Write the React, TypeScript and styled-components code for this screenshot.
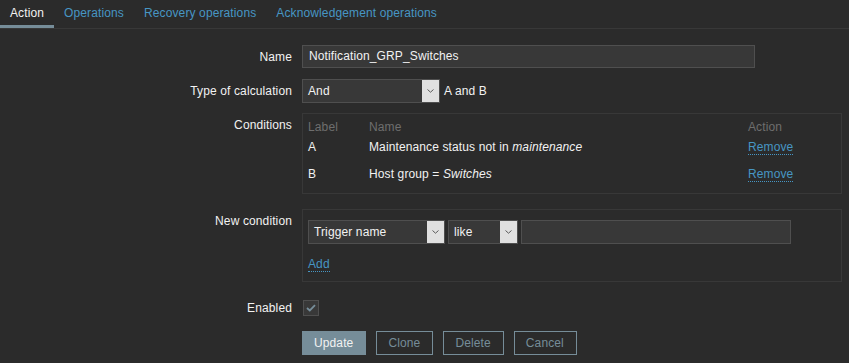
import React from 'react';
import styled, { createGlobalStyle } from 'styled-components';

const GlobalStyle = createGlobalStyle`
    html, body {
        margin: 0;
        padding: 0;
        background: #2b2b2b;
    }
    body {
        font-family: "Liberation Sans", Arial, sans-serif;
        font-size: 12px;
        letter-spacing: 0.12px;
        color: #f2f2f2;
    }
`;

const Tabs = styled.div`
    display: flex;
    height: 28px;
    border-bottom: 1px solid #383838;
`;

const Tab = styled.div<{ active?: boolean }>`
    padding: 0 10px;
    height: 28px;
    box-sizing: border-box;
    line-height: 26px;
    color: ${p => (p.active ? '#f2f2f2' : '#4796c4')};
    border-bottom: 3px solid ${p => (p.active ? '#768d99' : 'transparent')};
`;

const Form = styled.div`
    display: grid;
    grid-template-columns: 292px 540px;
    column-gap: 10px;
    padding-top: 16px;
`;

const Label = styled.div<{ top?: number }>`
    text-align: right;
    padding-top: ${p => p.top ?? 0}px;
    line-height: 14px;
`;

const Field = styled.div<{ gap?: number }>`
    display: flex;
    align-items: center;
    gap: 4px;
    margin-bottom: ${p => p.gap ?? 10}px;
`;

const Input = styled.div<{ width: number; tall?: boolean }>`
    width: ${p => p.width}px;
    height: ${p => (p.tall ? 24 : 23)}px;
    box-sizing: border-box;
    background: #383838;
    border: 1px solid #4f4f4f;
    padding: 0 6px;
    line-height: 21px;
    color: #f2f2f2;
`;

const SelectBox = styled.div<{ width: number }>`
    width: ${p => p.width}px;
    height: 24px;
    box-sizing: border-box;
    display: flex;
    background: #383838;
    border: 1px solid #4f4f4f;
    color: #f2f2f2;
`;

const SelectText = styled.span`
    flex: 1;
    padding: 0 5px;
    line-height: 22px;
`;

const SelectArrow = styled.span`
    width: 17px;
    background: #e0e0e0;
    display: flex;
    align-items: center;
    justify-content: center;
`;

const Panel = styled.div<{ gap: number }>`
    border: 1px solid #383838;
    margin-bottom: ${p => p.gap}px;
    box-sizing: border-box;
`;

const Table = styled.table`
    border-collapse: collapse;
    width: 100%;
    margin-top: 6px;
    margin-bottom: 12px;
    td, th {
        padding: 0 5px;
        text-align: left;
        font-weight: normal;
        height: 14px;
    }
    th {
        color: #6e6e6e;
        padding-bottom: 6px;
    }
    td {
        padding-bottom: 13px;
    }
    tr:last-child td {
        padding-bottom: 0;
    }
`;

const Link = styled.span`
    color: #4796c4;
    border-bottom: 1px dotted #4796c4;
`;

const NewCondBody = styled.div`
    padding: 10px 5px 9px;
    display: flex;
    flex-direction: column;
    gap: 12px;
`;

const Row = styled.div`
    display: flex;
    gap: 3px;
`;

const AddLine = styled.div`
    line-height: 16px;
`;

const Checkbox = styled.div`
    width: 14px;
    height: 14px;
    margin-left: 1px;
    background: #383838;
    border: 1px solid #4f4f4f;
    display: flex;
    align-items: center;
    justify-content: center;
`;

const Buttons = styled.div`
    display: flex;
    gap: 10px;
`;

const Button = styled.div<{ primary?: boolean }>`
    height: 24px;
    box-sizing: border-box;
    padding: 0 12px 0 11px;
    line-height: 22px;
    border: 1px solid #768d99;
    background: ${p => (p.primary ? '#768d99' : 'transparent')};
    color: ${p => (p.primary ? '#f2f2f2' : '#768d99')};
`;

const Chevron = () => (
    <svg width="9" height="6" viewBox="0 0 9 6">
        <path d="M1.5 1.5 L4.5 4.2 L7.5 1.5" fill="none" stroke="#5a5a5a" strokeWidth="1" />
    </svg>
);

const Select: React.FC<{ width: number; value: string }> = ({ width, value }) => (
    <SelectBox width={width}>
        <SelectText>{value}</SelectText>
        <SelectArrow><Chevron /></SelectArrow>
    </SelectBox>
);

export default function App() {
    return <>
        <GlobalStyle />
        <Tabs>
            <Tab active>Action</Tab>
            <Tab>Operations</Tab>
            <Tab>Recovery operations</Tab>
            <Tab>Acknowledgement operations</Tab>
        </Tabs>
        <Form>
            <Label top={5}>Name</Label>
            <Field gap={11}>
                <Input width={453}>Notification_GRP_Switches</Input>
            </Field>

            <Label top={5}>Type of calculation</Label>
            <Field>
                <Select width={138} value="And" />
                <span>A and B</span>
            </Field>

            <Label top={5}>Conditions</Label>
            <Panel gap={15}>
                <Table>
                    <thead>
                        <tr>
                            <th style={{ width: 51 }}>Label</th>
                            <th>Name</th>
                            <th style={{ width: 88 }}>Action</th>
                        </tr>
                    </thead>
                    <tbody>
                        <tr>
                            <td>A</td>
                            <td>Maintenance status not in <i>maintenance</i></td>
                            <td><Link>Remove</Link></td>
                        </tr>
                        <tr>
                            <td>B</td>
                            <td>Host group = <i>Switches</i></td>
                            <td><Link>Remove</Link></td>
                        </tr>
                    </tbody>
                </Table>
            </Panel>

            <Label top={5}>New condition</Label>
            <Panel gap={18}>
                <NewCondBody>
                    <Row>
                        <Select width={137} value="Trigger name" />
                        <Select width={70} value="like" />
                        <Input width={270} tall />
                    </Row>
                    <AddLine><Link>Add</Link></AddLine>
                </NewCondBody>
            </Panel>

            <Label top={1}>Enabled</Label>
            <Field gap={15}>
                <Checkbox>
                    <svg width="10" height="8" viewBox="0 0 10 8">
                        <path d="M1 4 L3.8 6.5 L9 1.2" fill="none" stroke="#768d99" strokeWidth="1.8" />
                    </svg>
                </Checkbox>
            </Field>

            <div />
            <Buttons>
                <Button primary>Update</Button>
                <Button>Clone</Button>
                <Button>Delete</Button>
                <Button>Cancel</Button>
            </Buttons>
        </Form>
    </>;
}
